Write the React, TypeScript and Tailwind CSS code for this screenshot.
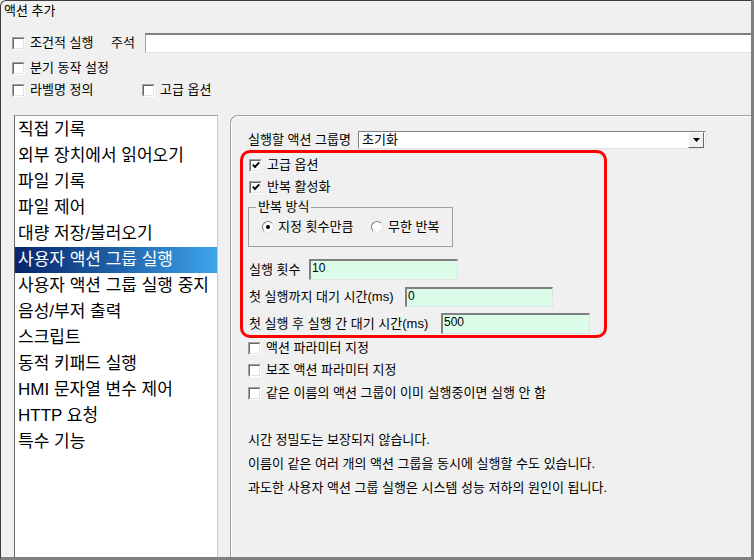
function Check({ checked = false }: { checked?: boolean }) {
  return (
    <span className="flex h-[13px] w-[13px] shrink-0 border border-t-[#a0a0a0] border-l-[#a0a0a0] border-r-white border-b-white">
      <span className="flex flex-1 items-center justify-center border border-t-[#696969] border-l-[#696969] border-r-[#e3e3e3] border-b-[#e3e3e3] bg-white">
        {checked && (
          <svg width="8" height="8" viewBox="0 0 8 8">
            <path d="M0.8 3.6 L3 6 L7.2 1.4" fill="none" stroke="#000" strokeWidth="1.9" />
          </svg>
        )}
      </span>
    </span>
  )
}

function Radio({ checked = false }: { checked?: boolean }) {
  return (
    <span className="flex h-[12px] w-[12px] shrink-0 items-center justify-center rounded-full border border-t-[#808080] border-l-[#808080] border-r-[#e3e3e3] border-b-[#e3e3e3] bg-white">
      {checked && <span className="h-[4px] w-[4px] rounded-full bg-black" />}
    </span>
  )
}

function Field({ value, className }: { value: string; className: string }) {
  return (
    <div
      className={`border-t-2 border-l-2 border-r border-b border-t-[#808080] border-l-[#808080] border-r-[#e3e3e3] border-b-[#e3e3e3] bg-[#dcfcea] pl-[1px] font-['Liberation_Sans',sans-serif] text-[12px] leading-[15px] ${className}`}
    >
      {value}
    </div>
  )
}

function CheckRow({ label, checked = false }: { label: string; checked?: boolean }) {
  return (
    <div className="flex h-[16px] items-center">
      <Check checked={checked} />
      <span className="ml-[5px]">{label}</span>
    </div>
  )
}

export default function App() {
  const actions = [
    "직접 기록",
    "외부 장치에서 읽어오기",
    "파일 기록",
    "파일 제어",
    "대량 저장/불러오기",
    "사용자 액션 그룹 실행",
    "사용자 액션 그룹 실행 중지",
    "음성/부저 출력",
    "스크립트",
    "동적 키패드 실행",
    "HMI 문자열 변수 제어",
    "HTTP 요청",
    "특수 기능",
  ]
  const selected = "사용자 액션 그룹 실행"

  const notes = [
    "시간 정밀도는 보장되지 않습니다.",
    "이름이 같은 여러 개의 액션 그룹을 동시에 실행할 수도 있습니다.",
    "과도한 사용자 액션 그룹 실행은 시스템 성능 저하의 원인이 됩니다.",
  ]

  return (
    <div className="flex h-[560px] w-[754px] flex-col overflow-hidden rounded-tl-[6px] border-t border-l border-r-[3px] border-b-[3px] border-t-[#3c3c3c] border-l-[#3c3c3c] border-r-[#808080] border-b-[#808080] bg-[#f0f0f0] font-['Liberation_Sans','Noto_Sans_CJK_KR',sans-serif] text-[13px] text-black">
      {/* title */}
      <div className="h-[32px] pl-[3px] pt-[2px] text-[13px] leading-[16px]">액션 추가</div>

      {/* top options */}
      <div className="flex h-[20px] items-center pl-[11px]">
        <Check />
        <span className="ml-[5px] w-[81px]">조건적 실행</span>
        <span className="w-[34px]">주석</span>
        <div className="h-[20px] flex-1 border-t-2 border-l border-b border-t-[#808080] border-l-[#a0a0a0] border-b-[#e3e3e3] bg-white" />
      </div>
      <div className="mt-[5px] flex h-[20px] items-center pl-[11px]">
        <Check />
        <span className="ml-[5px]">분기 동작 설정</span>
      </div>
      <div className="mt-[2px] flex h-[20px] items-center pl-[11px]">
        <Check />
        <span className="ml-[5px] w-[112px]">라벨명 정의</span>
        <Check />
        <span className="ml-[5px]">고급 옵션</span>
      </div>

      {/* main area */}
      <div className="mt-[15px] flex min-h-0 flex-1">
        <div className="ml-[13px] w-[204px] border-t border-l border-r border-t-[#a0a0a0] border-l-[#696969] border-r-[#c8c8c8] bg-white pt-[1px]">
          {actions.map((a) => (
            <div
              key={a}
              className={`flex h-[26px] items-center whitespace-nowrap pl-[3px] text-[17px] ${
                a === selected ? "bg-linear-to-r from-[#0a246a] to-[#3ea4ec] text-white" : ""
              }`}
            >
              {a}
            </div>
          ))}
        </div>

        <div className="ml-[12px] flex flex-1 flex-col rounded-tl-[8px] border-t border-l border-[#a0a0a0] shadow-[inset_1px_1px_0_#ffffff]">
          {/* action group name */}
          <div className="mt-[15px] flex h-[18px] items-center pl-[17px]">
            <span className="w-[110px]">실행할 액션 그룹명</span>
            <div className="flex h-[18px] w-[348px] items-center border-t border-l border-r border-b border-t-[#808080] border-l-[#808080] border-r-[#e3e3e3] border-b-[#e3e3e3] bg-white">
              <span className="flex-1 pl-[3px]">초기화</span>
              <span className="mr-[1px] flex h-[16px] w-[16px] items-center justify-center border border-t-white border-l-white border-r-[#696969] border-b-[#696969] bg-[#f0f0f0]">
                <svg width="7" height="4" viewBox="0 0 7 4">
                  <path d="M0 0 H7 L3.5 4 Z" fill="#000" />
                </svg>
              </span>
            </div>
          </div>

          {/* highlighted repeat options */}
          <div className="mt-[1px] ml-[9px] flex h-[188px] w-[367px] flex-col rounded-[10px] border-[3px] border-[#ff0000] pl-[5px]">
            <div className="mt-[4px] pl-[1px]">
              <CheckRow label="고급 옵션" checked />
            </div>
            <div className="mt-[6px] pl-[1px]">
              <CheckRow label="반복 활성화" checked />
            </div>
            <fieldset className="mt-[5px] w-[205px] border border-[#a0a0a0] pt-[5px] pb-[11px]">
              <legend className="ml-[7px] px-[2px] leading-[14px]">반복 방식</legend>
              <div className="flex h-[16px] items-center pl-[13px]">
                <Radio checked />
                <span className="ml-[4px] w-[93px]">지정 횟수만큼</span>
                <Radio />
                <span className="ml-[5px]">무한 반복</span>
              </div>
            </fieldset>
            <div className="mt-[12px] flex h-[21px] items-center pl-[1px]">
              <span className="w-[60px]">실행 횟수</span>
              <Field value="10" className="h-[21px] w-[149px]" />
            </div>
            <div className="mt-[7px] flex h-[20px] items-center pl-[1px]">
              <span className="w-[156px]">첫 실행까지 대기 시간(ms)</span>
              <Field value="0" className="h-[20px] w-[148px]" />
            </div>
            <div className="mt-[6px] flex h-[21px] items-center pl-[1px]">
              <span className="w-[192px]">첫 실행 후 실행 간 대기 시간(ms)</span>
              <Field value="500" className="h-[21px] w-[149px]" />
            </div>
          </div>

          <div className="mt-[2px] pl-[17px]">
            <CheckRow label="액션 파라미터 지정" />
          </div>
          <div className="mt-[6px] pl-[17px]">
            <CheckRow label="보조 액션 파라미터 지정" />
          </div>
          <div className="mt-[7px] pl-[17px]">
            <CheckRow label="같은 이름의 액션 그룹이 이미 실행중이면 실행 안 함" />
          </div>

          <div className="mt-[27px] pl-[17px] leading-[24px]">
            {notes.map((n) => (
              <div key={n}>{n}</div>
            ))}
          </div>
        </div>
      </div>
    </div>
  )
}
